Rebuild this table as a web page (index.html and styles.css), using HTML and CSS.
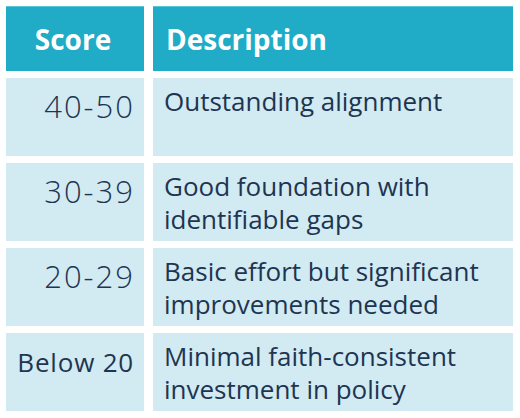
FILE: index.html
```html
<!DOCTYPE html>
<html lang="en">

<head>
    <meta charset="UTF-8">
    <meta name="viewport" content="width=device-width, initial-scale=1.0">
    <title>Score table</title>
    <link rel="stylesheet" href="styles.css">
</head>

<body>
    <div class="scoreTable">
        <div class="head score">Score</div>
        <div class="head desc">Description</div>

        <div class="cell score">40-50</div>
        <div class="cell desc">Outstanding alignment</div>

        <div class="cell score">30-39</div>
        <div class="cell desc">Good foundation with<br>identifiable gaps</div>

        <div class="cell score">20-29</div>
        <div class="cell desc">Basic effort but significant<br>improvements needed</div>

        <div class="cell score small">Below 20</div>
        <div class="cell desc">Minimal faith-consistent<br>investment in policy</div>
    </div>
</body>

</html>
```

FILE: styles.css
```css
body {
    margin: 0;
    background-color: #ffffff;
    font-family: "Open Sans", "Liberation Sans", sans-serif;
}

.scoreTable {
    display: grid;
    grid-template-columns: 138px 360px;
    grid-template-rows: 65px repeat(4, 78px);
    column-gap: 9px;
    row-gap: 7px;
    padding: 6px 0 0 6px;
}

.scoreTable>.head {
    background-color: #20abc6;
    border-top: 1px solid #5cc3d8;
    color: #ffffff;
    font-size: 28px;
    font-weight: 700;
    display: flex;
    align-items: center;
}

.scoreTable>.head.score {
    justify-content: center;
    padding-right: 4px;
}

.scoreTable>.head.desc {
    padding-left: 13px;
}

.scoreTable>.cell {
    background-color: #d2eaf1;
    color: #1e3551;
    font-size: 26px;
    line-height: 33px;
    padding-top: 7px;
}

.scoreTable>.cell.score {
    text-align: right;
    font-size: 31px;
    font-weight: 300;
    letter-spacing: 2px;
    padding-top: 12px;
    padding-right: 9px;
}

.scoreTable>.cell.score.small {
    font-size: 26px;
    font-weight: 400;
    letter-spacing: 0.8px;
    padding-top: 13px;
    padding-right: 10px;
}

.scoreTable>.cell.desc {
    padding-left: 11px;
}
```
